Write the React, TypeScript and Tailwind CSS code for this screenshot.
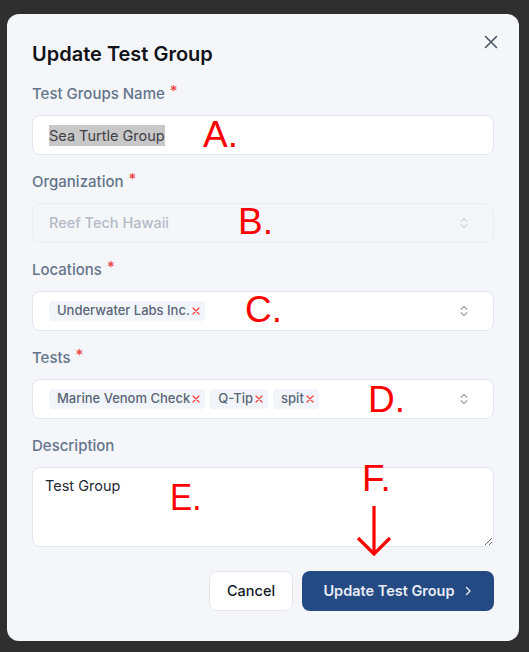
import React from "react";

function Chevrons({ light }: { light?: boolean }) {
  return (
    <svg width="14" height="14" viewBox="0 0 24 24" fill="none" stroke={light ? "#d1d5db" : "#9ca3af"} strokeWidth="2" strokeLinecap="round" strokeLinejoin="round">
      <path d="m7 15 5 5 5-5" />
      <path d="m7 9 5-5 5 5" />
    </svg>
  );
}

function Label({ text, required }: { text: string; required?: boolean }) {
  return (
    <div className="flex items-start h-[20px] text-[15px] leading-[20px] font-medium text-[#64748b]">
      <span>{text}</span>
      {required && <span className="ml-[5px] text-[#ef4444] text-[15px] leading-[14px]">*</span>}
    </div>
  );
}

function Chip({ text }: { text: string }) {
  return (
    <span className="flex items-center h-[20px] rounded-[4px] bg-[#f1f5f9] pl-[8px] pr-[5px] text-[13px] font-medium text-[#5b6578]">
      {text}
      <svg className="ml-[2px]" width="8" height="8" viewBox="0 0 8 8" stroke="#ef4444" strokeWidth="1.3" strokeLinecap="round">
        <path d="M1 1l6 6M7 1L1 7" />
      </svg>
    </span>
  );
}

export default function App() {
  return (
    <div className="w-[529px] h-[652px] bg-[#2f2f2f] pt-[14px] pl-[7px] overflow-hidden" style={{ fontFamily: "Inter, 'Noto Sans', sans-serif" }}>
      <div className="relative w-[512px] h-[627px] rounded-[12px] bg-[#f5f6fa] px-[25px] pt-[27px]">
        <button className="absolute right-[21px] top-[21px] text-[#4b5563]">
          <svg width="14" height="14" viewBox="0 0 14 14" stroke="currentColor" strokeWidth="1.6" strokeLinecap="round">
            <path d="M1.5 1.5l11 11M12.5 1.5l-11 11" />
          </svg>
        </button>
        <h2 className="text-[20px] leading-[26px] font-semibold text-[#111318]">Update Test Group</h2>

        <div className="mt-[17px]">
          <Label text="Test Groups Name" required />
          <div className="mt-[11px] h-[40px] rounded-[8px] border border-[#e2e6ee] bg-white flex items-center px-[16px]">
            <span className="bg-[#c8c8c8] text-[14.5px] leading-[21px] text-[#3f3f46]">Sea Turtle Group</span>
          </div>
        </div>

        <div className="mt-[17px]">
          <Label text="Organization" required />
          <div className="mt-[11px] h-[40px] rounded-[8px] border border-[#eceef3] bg-[#f5f6fa] flex items-center justify-between px-[16px] pr-[22px]">
            <span className="text-[14.5px] font-medium text-[#b4bac6]">Reef Tech Hawaii</span>
            <Chevrons light />
          </div>
        </div>

        <div className="mt-[17px]">
          <Label text="Locations" required />
          <div className="mt-[11px] h-[40px] rounded-[8px] border border-[#e2e6ee] bg-white flex items-center justify-between pl-[16px] pr-[22px]">
            <div className="flex gap-[5px]">
              <Chip text="Underwater Labs Inc." />
            </div>
            <Chevrons />
          </div>
        </div>

        <div className="mt-[17px]">
          <Label text="Tests" required />
          <div className="mt-[11px] h-[40px] rounded-[8px] border border-[#e2e6ee] bg-white flex items-center justify-between pl-[16px] pr-[22px]">
            <div className="flex gap-[5px]">
              <Chip text="Marine Venom Check" />
              <Chip text="Q-Tip" />
              <Chip text="spit" />
            </div>
            <Chevrons />
          </div>
        </div>

        <div className="mt-[17px]">
          <Label text="Description" />
          <textarea
            defaultValue="Test Group"
            className="mt-[11px] block w-full h-[80px] rounded-[8px] border border-[#e2e6ee] bg-white px-[12px] py-[7px] text-[14.5px] text-[#1f2937] outline-none"
          />
        </div>

        <div className="mt-[24px] flex justify-end gap-[9px]">
          <button className="h-[40px] w-[84px] rounded-[8px] border border-[#e5e7eb] bg-white text-[14.5px] font-medium text-[#111827]">Cancel</button>
          <button className="h-[40px] w-[192px] rounded-[8px] bg-[#244a84] text-[14.5px] font-semibold text-[#e8ecf4] flex items-center justify-center gap-[8px]">
            Update Test Group
            <svg width="10" height="10" viewBox="0 0 10 10" fill="none" stroke="currentColor" strokeWidth="1.4" strokeLinecap="round" strokeLinejoin="round">
              <path d="M3.5 1.5L7 5l-3.5 3.5" />
            </svg>
          </button>
        </div>

        <div className="absolute inset-0 pointer-events-none text-[#ff0000] text-[37px] leading-none" style={{ fontFamily: "'Liberation Sans', Arial, sans-serif" }}>
          <span className="absolute left-[196px] top-[102px]">A.</span>
          <span className="absolute left-[231px] top-[189px]">B.</span>
          <span className="absolute left-[238px] top-[277px]">C.</span>
          <span className="absolute left-[361px] top-[367px]">D.</span>
          <span className="absolute left-[163px] top-[465px] scale-x-90 origin-left">E.</span>
          <span className="absolute left-[355px] top-[446px]">F.</span>
          <svg className="absolute left-[349px] top-[492px]" width="36" height="50" viewBox="0 0 36 50" fill="none" stroke="#ff0000" strokeWidth="3.2">
            <path d="M18 0v46" />
            <path d="M2 32l16 16 16-16" />
          </svg>
        </div>
      </div>
    </div>
  );
}
